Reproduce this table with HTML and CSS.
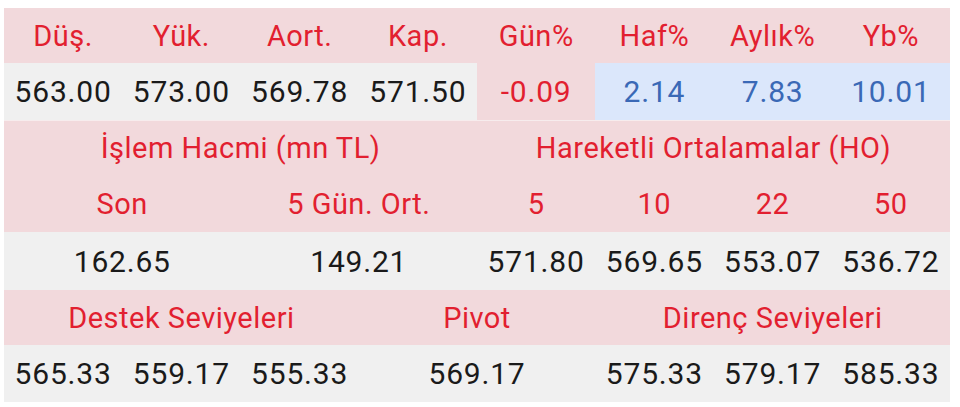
FILE: index.html
```html
<!DOCTYPE html>
<html lang="tr">
<head>
<meta charset="utf-8">
<title>Hisse Özeti</title>
<link rel="stylesheet" href="styles.css">
</head>
<body>
<div class="wrap">
<table class="summary">
  <colgroup>
    <col><col><col><col><col><col><col><col>
  </colgroup>
  <tr class="head r1">
    <th>Düş.</th><th>Yük.</th><th>Aort.</th><th>Kap.</th><th>Gün%</th><th>Haf%</th><th>Aylık%</th><th>Yb%</th>
  </tr>
  <tr class="vals r2">
    <td>563.00</td><td>573.00</td><td>569.78</td><td>571.50</td>
    <td class="neg">-0.09</td><td class="pos">2.14</td><td class="pos">7.83</td><td class="pos">10.01</td>
  </tr>
  <tr class="head r3 gap">
    <th colspan="4">İşlem Hacmi (mn TL)</th><th colspan="4">Hareketli Ortalamalar (HO)</th>
  </tr>
  <tr class="head r4">
    <th colspan="2">Son</th><th colspan="2">5 Gün. Ort.</th><th>5</th><th>10</th><th>22</th><th>50</th>
  </tr>
  <tr class="vals r5">
    <td colspan="2">162.65</td><td colspan="2">149.21</td><td>571.80</td><td>569.65</td><td>553.07</td><td>536.72</td>
  </tr>
  <tr class="head r6">
    <th colspan="3">Destek Seviyeleri</th><th colspan="2">Pivot</th><th colspan="3">Direnç Seviyeleri</th>
  </tr>
  <tr class="vals r7">
    <td>565.33</td><td>559.17</td><td>555.33</td><td colspan="2">569.17</td><td>575.33</td><td>579.17</td><td>585.33</td>
  </tr>
</table>
</div>
</body>
</html>
```

FILE: styles.css
```css
html, body {
  margin: 0;
  padding: 0;
  background: #ffffff;
}
.wrap {
  padding: 8px 10px 0 4px;
}
.summary {
  width: 946px;
  table-layout: fixed;
  border-collapse: collapse;
  font-family: "Roboto", "Liberation Sans", sans-serif;
  font-size: 30px;
}
.summary th,
.summary td {
  padding: 0;
  text-align: center;
  vertical-align: middle;
  white-space: nowrap;
  font-weight: 400;
}
.head {
  background: #f2d9dc;
  color: #e21f30;
}
.head th {
  font-size: 29px;
  letter-spacing: 0.5px;
}
.vals {
  background: #f0f0f0;
  color: #1a1a1a;
}
.vals td {
  letter-spacing: 0.8px;
}
.vals td.neg {
  background: #f2d9dc;
  color: #e21f30;
}
.vals td.pos {
  background: #dbe7fb;
  color: #3a69b6;
}
.r1 { height: 55px; }
.r2 { height: 57px; }
.r3 { height: 56px; }
.r4 { height: 56px; }
.r5 { height: 58px; }
.r6 { height: 55px; }
.r7 { height: 57px; }
.gap th {
  border-top: 1px solid #f7eced;
}
```
